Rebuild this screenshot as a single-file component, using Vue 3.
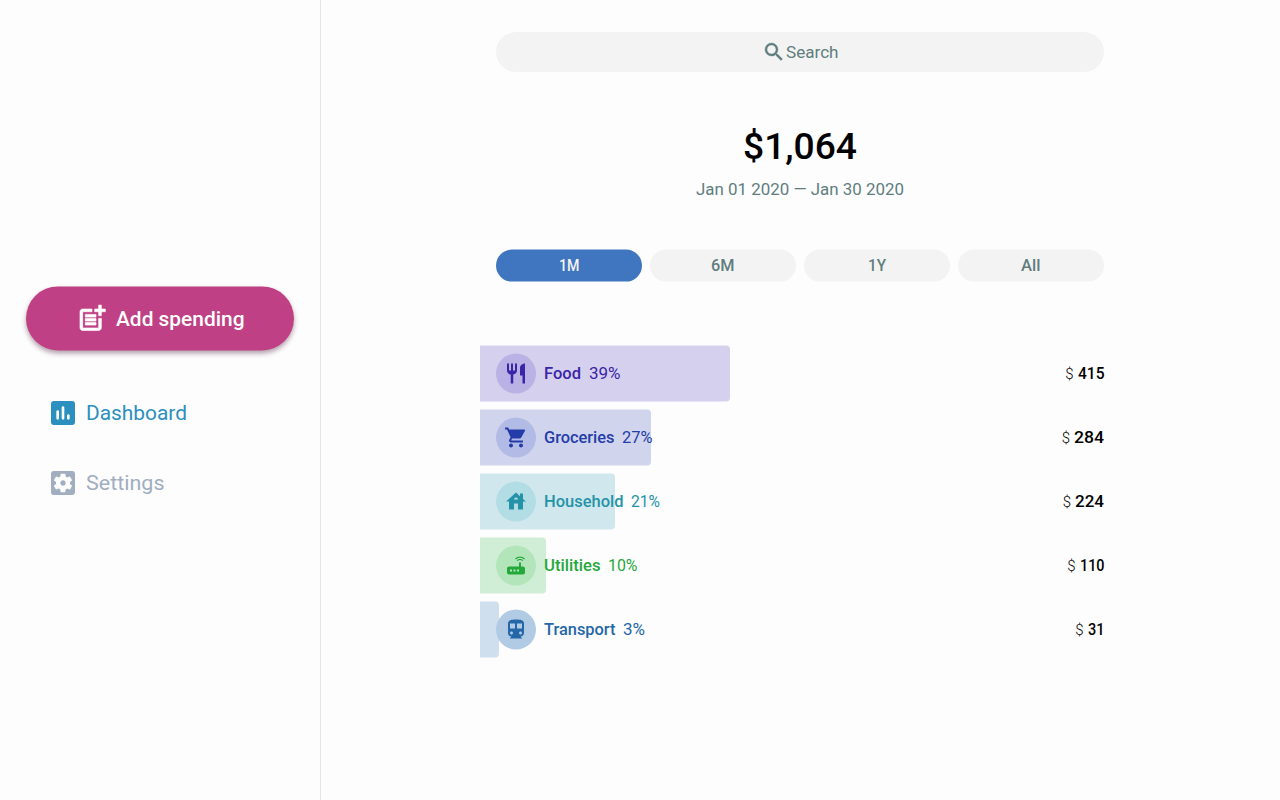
<script setup>
// Sets each label to a given width by stretching its glyphs.
const vFit = (el, { value }) => {
  el.style.width = 'auto'
  el.style.transform = 'none'
  const natural = el.getBoundingClientRect().width
  el.style.width = value + 'px'
  el.style.transform = `scaleX(${value / natural})`
}

const total = 1064
const ranges = [
  { label: '1M', fit: 20.5 },
  { label: '6M', fit: 23.5 },
  { label: '1Y', fit: 18 },
  { label: 'All', fit: 19.5 },
]
const categories = [
  {
    name: 'Food', key: 'food', percent: '39%', amount: 415, fits: [37, 31.5, 26.5],
    icon: 'M11 9H9V2H7v7H5V2H3v7c0 2.12 1.66 3.84 3.75 3.97V22h2.5v-9.03C11.34 12.84 13 11.12 13 9V2h-2v7zm5-3v8h2.5v8H21V2c-2.76 0-5 2.24-5 4z',
  },
  {
    name: 'Groceries', key: 'groceries', percent: '27%', amount: 284, fits: [70.5, 30.5, 30],
    icon: 'M7 18c-1.1 0-1.99.9-1.99 2S5.9 22 7 22s2-.9 2-2-.9-2-2-2zM1 2v2h2l3.6 7.59-1.35 2.45c-.16.28-.25.61-.25.96 0 1.1.9 2 2 2h12v-2H7.42c-.14 0-.25-.11-.25-.25l.03-.12.9-1.63h7.45c.75 0 1.41-.41 1.75-1.03l3.58-6.49A1 1 0 0 0 20 4H5.21l-.94-2H1zm16 16c-1.1 0-1.99.9-1.99 2s.89 2 1.99 2 2-.9 2-2-.9-2-2-2z',
  },
  {
    name: 'Household', key: 'household', percent: '21%', amount: 224, fits: [79.5, 29, 29],
    icon: 'M19 9.3V4h-3v2.6L12 3 2 12h3v8h5v-6h4v6h5v-8h3l-3-2.7zm-9 .7c0-1.1.9-2 2-2s2 .9 2 2h-4z',
  },
  {
    name: 'Utilities', key: 'utilities', percent: '10%', amount: 110, fits: [56.5, 29.5, 24.5],
    icon: 'M20.2 5.9l.8-.8C19.6 3.7 17.8 3 16 3s-3.6.7-5 2.1l.8.8C13 4.8 14.5 4.2 16 4.2s3 .6 4.2 1.7zm-.9.8c-.9-.9-2.1-1.4-3.3-1.4s-2.4.5-3.3 1.4l.8.8c.7-.7 1.6-1 2.5-1 .9 0 1.8.3 2.5 1l.8-.8zM19 13h-2V9h-2v4H5c-1.1 0-2 .9-2 2v4c0 1.1.9 2 2 2h14c1.1 0 2-.9 2-2v-4c0-1.1-.9-2-2-2zM8 18H6v-2h2v2zm3.5 0h-2v-2h2v2zm3.5 0h-2v-2h2v2z',
  },
  {
    name: 'Transport', key: 'transport', percent: '3%', amount: 31, fits: [71.5, 22, 16.5],
    icon: 'M12 2c-4.42 0-8 .5-8 4v9.5C4 17.43 5.57 19 7.5 19L6 20.5v.5h12v-.5L16.5 19c1.93 0 3.5-1.57 3.5-3.5V6c0-3.5-3.58-4-8-4zM7.5 17c-.83 0-1.5-.67-1.5-1.5S6.67 14 7.5 14s1.5.67 1.5 1.5S8.33 17 7.5 17zm3.5-6H6V6h5v5zm5.5 6c-.83 0-1.5-.67-1.5-1.5s.67-1.5 1.5-1.5 1.5.67 1.5 1.5-.67 1.5-1.5 1.5zm1.5-6h-5V6h5v5z',
  },
]
</script>

<template>
  <div class="app">
    <aside class="sidebar">
      <button class="add">
        <svg class="icon-lg add-icon" viewBox="0 0 24 24">
          <path d="M17 19.22H5V7h7V5H5c-1.1 0-2 .9-2 2v12c0 1.1.9 2 2 2h12c1.1 0 2-.9 2-2v-7h-2v7.22zM19 2h-2v3h-3v2h3v3h2V7h3V5h-3V2zM7 9h8v2H7zM7 12h8v2H7zM7 15h8v2H7z" />
        </svg>
        <span v-fit="128.5">Add spending</span>
      </button>
      <nav>
        <a class="link active">
          <svg class="icon-lg" viewBox="0 0 24 24">
            <path d="M19 3H5c-1.1 0-2 .9-2 2v14c0 1.1.9 2 2 2h14c1.1 0 2-.9 2-2V5c0-1.1-.9-2-2-2zM8 17c-.55 0-1-.45-1-1v-5c0-.55.45-1 1-1s1 .45 1 1v5c0 .55-.45 1-1 1zm4 0c-.55 0-1-.45-1-1V8c0-.55.45-1 1-1s1 .45 1 1v8c0 .55-.45 1-1 1zm4 0c-.55 0-1-.45-1-1v-2c0-.55.45-1 1-1s1 .45 1 1v2c0 .55-.45 1-1 1z" />
          </svg>
          <span v-fit="101">Dashboard</span>
        </a>
        <a class="link">
          <svg class="icon-lg" viewBox="0 0 24 24">
            <path d="M12 10c-1.1 0-2 .9-2 2s.9 2 2 2 2-.9 2-2-.9-2-2-2zm7-7H5c-1.11 0-2 .9-2 2v14c0 1.1.89 2 2 2h14c1.11 0 2-.9 2-2V5c0-1.1-.89-2-2-2zm-1.75 9c0 .23-.02.46-.05.68l1.48 1.16c.13.11.17.3.08.45l-1.4 2.42c-.09.15-.27.21-.43.15l-1.74-.7c-.36.28-.76.51-1.18.69l-.26 1.85c-.03.17-.18.3-.35.3h-2.8c-.17 0-.32-.13-.35-.29l-.26-1.85c-.43-.18-.82-.41-1.18-.69l-1.74.7c-.16.06-.34 0-.43-.15l-1.4-2.42c-.09-.15-.05-.34.08-.45l1.48-1.16c-.03-.23-.05-.46-.05-.69 0-.23.02-.46.05-.68l-1.48-1.16c-.13-.11-.17-.3-.08-.45l1.4-2.42c.09-.15.27-.21.43-.15l1.74.7c.36-.28.76-.51 1.18-.69l.26-1.85c.03-.17.18-.3.35-.3h2.8c.17 0 .32.13.35.29l.26 1.85c.43.18.82.41 1.18.69l1.74-.7c.16-.06.34 0 .43.15l1.4 2.42c.09.15.05.34-.08.45l-1.48 1.16c.03.23.05.46.05.69z" />
          </svg>
          <span v-fit="78.5">Settings</span>
        </a>
      </nav>
    </aside>

    <main>
      <div class="search">
        <svg viewBox="0 0 24 24">
          <path d="M15.5 14h-.79l-.28-.27A6.47 6.47 0 0 0 16 9.5 6.5 6.5 0 1 0 9.5 16c1.61 0 3.09-.59 4.23-1.57l.27.28v.79l5 4.99L20.49 19l-4.99-5zm-6 0C7.01 14 5 11.99 5 9.5S7.01 5 9.5 5 14 7.01 14 9.5 11.99 14 9.5 14z" />
        </svg>
        <span v-fit="52.5">Search</span>
      </div>
      <h1><span v-fit="114">$1,064</span></h1>
      <p class="period"><span v-fit="208">Jan 01 2020 — Jan 30 2020</span></p>
      <div class="ranges">
        <button v-for="(r, i) in ranges" :key="r.label" :class="{ selected: i === 0 }">
          <span v-fit="r.fit">{{ r.label }}</span>
        </button>
      </div>
      <ul class="categories">
        <li v-for="c in categories" :key="c.key" :class="c.key">
          <div class="bar" :style="{ width: (c.amount / total) * 100 + '%' }"></div>
          <div class="badge"><svg viewBox="0 0 24 24"><path :d="c.icon" /></svg></div>
          <span v-fit="c.fits[0]" class="name">{{ c.name }}</span>
          <span v-fit="c.fits[1]" class="percent">{{ c.percent }}</span>
          <span class="currency">$</span>
          <span v-fit="c.fits[2]" class="amount">{{ c.amount }}</span>
        </li>
      </ul>
    </main>
  </div>
</template>

<style>
body {
  background: #fdfdfd;
}
</style>

<style scoped>
.app {
  display: flex;
  height: 800px;
  overflow: hidden;
  background: #fdfdfd;
  color: #000;
  font: 400 16px/20px Roboto, "Liberation Sans", sans-serif;
}
svg {
  display: block;
  flex: none;
  fill: currentColor;
}
span {
  display: inline-block;
  flex: none;
  transform-origin: 0 50%;
  text-align: left;
  white-space: nowrap;
}
button {
  display: flex;
  align-items: center;
  justify-content: center;
  padding: 0;
  border: 0;
  font: inherit;
}
.icon-lg {
  width: 32px;
  height: 32px;
}
.sidebar {
  box-sizing: border-box;
  flex: none;
  width: 321px;
  padding: 287px 26px 0;
  border-right: 1px solid #e5e6e8;
}
.add {
  width: 268px;
  height: 64px;
  gap: 7.5px;
  border-radius: 32px;
  background: #bf4084;
  box-shadow: 0 3px 5px rgba(60, 10, 40, 0.38);
  color: #fff;
  font-size: 20px;
  font-weight: 500;
  transform: translateY(-0.6px);
}
.add span {
  padding-top: 1px;
}
.add-icon {
  margin-bottom: 1px;
  stroke: currentColor;
  stroke-width: 0.5;
  stroke-linejoin: round;
}
nav {
  display: flex;
  flex-direction: column;
  gap: 38px;
  padding: 46px 0 0 21px;
}
.link {
  display: flex;
  align-items: center;
  gap: 6.5px;
  height: 32px;
  color: #a0aec0;
  font-size: 20px;
}
.link.active {
  color: #2b8fbf;
}
main {
  flex: none;
  width: 640px;
  margin-left: 159px;
  padding-top: 32px;
}
.search {
  display: flex;
  align-items: center;
  justify-content: center;
  height: 40px;
  margin: 0 16px;
  border-radius: 20px;
  background: #f3f3f3;
  color: #607d7d;
}
.search svg {
  width: 24px;
  height: 24px;
  stroke: currentColor;
  stroke-width: 0.4;
}
.search span {
  padding-top: 1px;
}
h1 {
  margin: 52px 0 0;
  text-align: center;
  font-size: 36px;
  font-weight: 500;
  line-height: 46px;
}
.period {
  margin: 10px 0 0;
  text-align: center;
  color: #607d7d;
}
.ranges {
  display: grid;
  grid-template-columns: repeat(4, 1fr);
  gap: 8px;
  margin: 50px 16px 0;
}
.period span,
h1 span {
  vertical-align: top;
}
.ranges button {
  height: 32px;
  border-radius: 16px;
  background: #f3f3f3;
  color: #607d7d;
  font-weight: 500;
  transform: translateY(-0.4px);
}
.ranges .selected {
  background: #4075bf;
  color: #f3f3f3;
}
.categories {
  display: grid;
  gap: 8px;
  margin: 64px 0 0;
  padding: 0;
  list-style: none;
}
.categories li {
  position: relative;
  display: flex;
  align-items: center;
  height: 56px;
  padding: 0 16px;
}
.bar {
  position: absolute;
  inset: 0 auto 0 0;
  border-radius: 0 4px 4px 0;
  transform: translateY(-0.4px);
}
.badge {
  position: relative;
  display: grid;
  place-items: center;
  width: 40px;
  height: 40px;
  border-radius: 50%;
  transform: translateY(-0.4px);
}
.badge svg {
  width: 24px;
  height: 24px;
}
.name,
.percent {
  position: relative;
}
.name {
  margin-left: 8px;
}
.percent {
  margin-left: 7.5px;
}
.name,
.amount {
  font-weight: 500;
}
.currency {
  margin-left: auto;
  margin-right: 4px;
  color: #000;
  font-size: 15px;
  font-weight: 300;
}
.amount {
  color: #000;
}
.food { color: #3a24a8; }
.food .bar { background: #d5d0ed; }
.food .badge { background: #bab2e5; }
.groceries { color: #243ca8; }
.groceries .bar { background: #d0d4ed; }
.groceries .badge { background: #b2bbe5; }
.household { color: #2493a8; }
.household .bar { background: #d0e8ed; }
.household .badge { background: #b2dde5; }
.utilities { color: #24a83a; }
.utilities .bar { background: #d0edd5; }
.utilities .badge { background: #b2e5ba; }
.transport { color: #2466a8; }
.transport .bar { background: #d0dfed; }
.transport .badge { background: #b2cbe5; }
</style>
